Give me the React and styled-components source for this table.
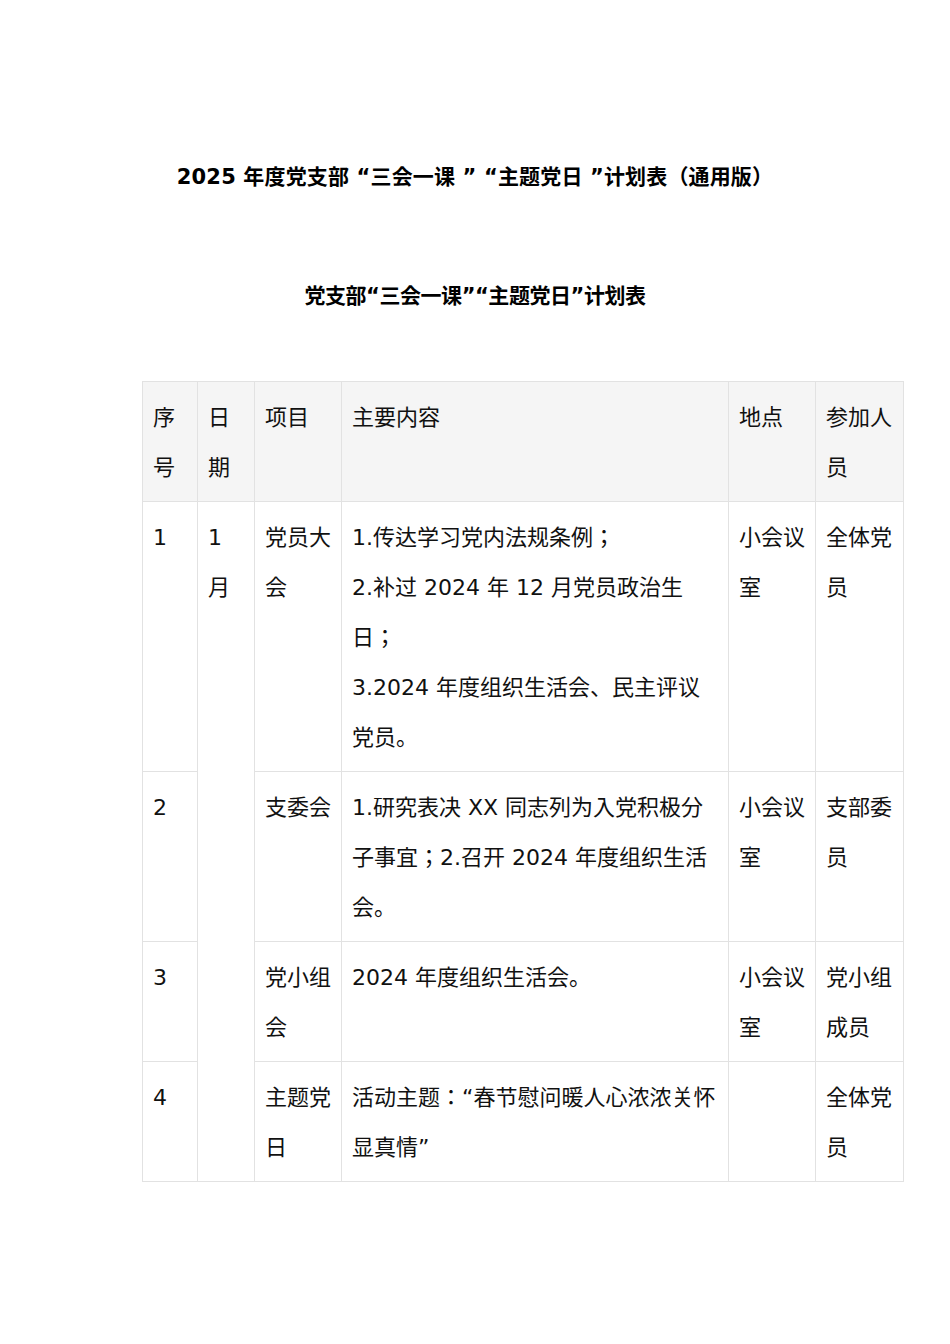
import React from "react";
import styled, { createGlobalStyle } from "styled-components";

const Global = createGlobalStyle`
  html, body { margin: 0; padding: 0; background: #fff; }
  body { font-family: "DejaVu Sans", "Noto Sans CJK JP", "Noto Sans CJK SC", sans-serif; color: #111; }
`;

const Page = styled.div`
  width: 950px;
  min-height: 1344px;
  padding-top: 160px;
  box-sizing: border-box;
`;

const Title = styled.h1`
  margin: 0;
  text-align: center;
  font-size: 21px;
  line-height: 34px;
  font-weight: bold;
  letter-spacing: 0.15px;
  color: #000;
`;

const SubTitle = styled.h2`
  margin: 85px 0 0;
  text-align: center;
  font-size: 21px;
  line-height: 34px;
  font-weight: bold;
  letter-spacing: -0.45px;
  color: #000;
`;

const TableWrap = styled.div`
  margin-top: 68px;
  padding-left: 142px;
`;

const Table = styled.table`
  border-collapse: collapse;
  table-layout: fixed;
  width: 761px;
  font-size: 22px;
  line-height: 50px;
`;

const Cell = styled.td`
  border: 1px solid #e2e2e2;
  padding: 11px 10px 8px 10px;
  vertical-align: top;
  text-align: left;
  font-weight: normal;
  background: ${(p) => (p.$head ? "#f5f5f5" : "#fff")};
  color: #111;
  word-break: break-all;
`;

const Line = styled.div`
  margin: 0;
`;

const cols = [55, 57, 87, 387, 87, 88];

const rows = [
  {
    no: "1",
    item: "党员大会",
    content: ["1.传达学习党内法规条例；", "2.补过 2024 年 12 月党员政治生日；", "3.2024 年度组织生活会、民主评议党员。"],
    place: "小会议室",
    who: "全体党员",
  },
  {
    no: "2",
    item: "支委会",
    content: ["1.研究表决 XX 同志列为入党积极分子事宜；2.召开 2024 年度组织生活会。"],
    place: "小会议室",
    who: "支部委员",
  },
  {
    no: "3",
    item: "党小组会",
    content: ["2024 年度组织生活会。"],
    place: "小会议室",
    who: "党小组成员",
  },
  {
    no: "4",
    item: "主题党日",
    content: ["活动主题：“春节慰问暖人心浓浓关怀显真情”"],
    place: "",
    who: "全体党员",
  },
];

const heads = ["序号", "日期", "项目", "主要内容", "地点", "参加人员"];

export default function App() {
  return (
    <>
      <Global />
      <Page>
        <Title>2025 年度党支部 “三会一课 ” “主题党日 ”计划表（通用版）</Title>
        <SubTitle>党支部“三会一课”“主题党日”计划表</SubTitle>
        <TableWrap>
          <Table>
            <colgroup>
              {cols.map((w, i) => (
                <col key={i} style={{ width: w }} />
              ))}
            </colgroup>
            <thead>
              <tr>
                {heads.map((h) => (
                  <Cell as="th" $head key={h}>{h}</Cell>
                ))}
              </tr>
            </thead>
            <tbody>
              {rows.map((r, i) => (
                <tr key={i}>
                  <Cell>{r.no}</Cell>
                  {i === 0 && <Cell rowSpan={4}>1 月</Cell>}
                  <Cell>{r.item}</Cell>
                  <Cell>
                    {r.content.map((c, j) => (
                      <Line key={j}>{c}</Line>
                    ))}
                  </Cell>
                  <Cell>{r.place}</Cell>
                  <Cell>{r.who}</Cell>
                </tr>
              ))}
            </tbody>
          </Table>
        </TableWrap>
      </Page>
    </>
  );
}
